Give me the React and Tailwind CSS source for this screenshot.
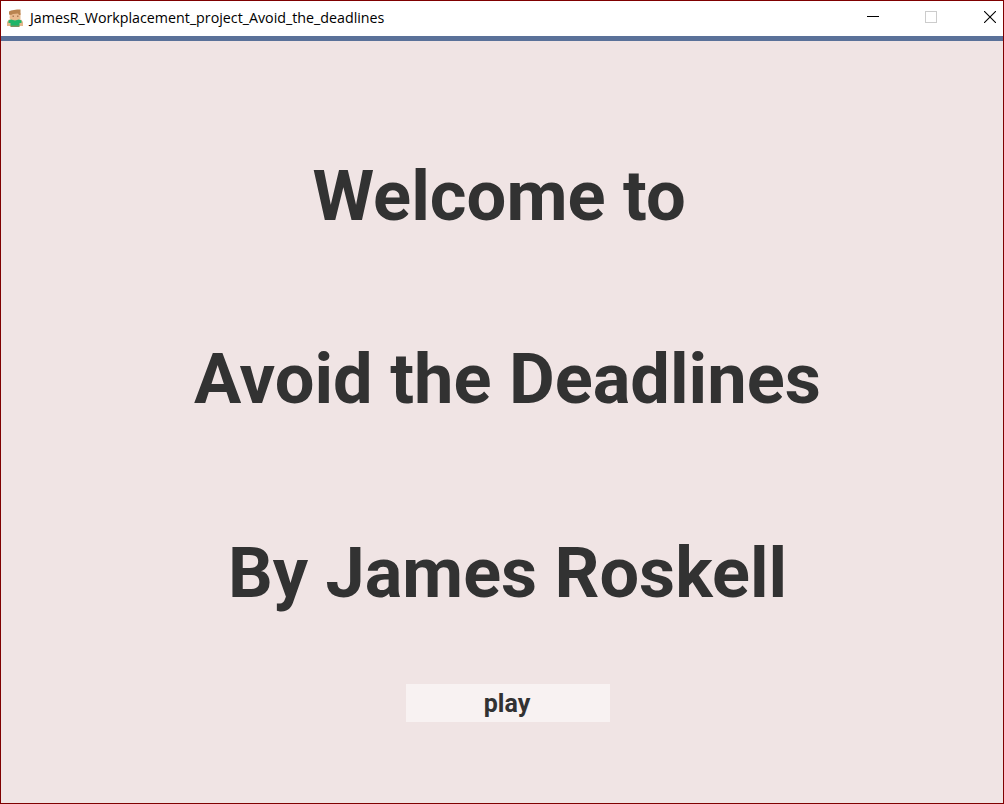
function CharacterIcon() {
  return (
    <svg className="mb-px h-[18px] w-4 shrink-0" viewBox="0 0 16 18">
      <path d="M3 4h10.500v5.500L12 11H4L2.500 9z" fill="#e9bb8f" />
      <path d="M2 5.500V2.500L4 1.500l6-1h3.500V6h-1.500L11 4.500 6 5 4 6z" fill="#b98450" />
      <path d="M5.500 6.500h1.500V8H5.500zM10 6.500h1.500V8H10z" fill="#b07c57" />
      <path d="M2 10.500h12L16 13v4h-3v1H3v-1H0v-4z" fill="#e3b78c" />
      <path d="M1.500 11.500L4 10.500l4 1 4-1 2.500 1v2.500h-2V17h-9v-3h-2z" fill="#1fb568" />
      <path d="M4 16.500h8V18H4z" fill="#7c9260" />
    </svg>
  );
}

function TitleBar() {
  return (
    <header className="flex h-[35px] shrink-0 items-center bg-white pl-[6px] text-black">
      <CharacterIcon />
      <h1 className="mb-[2px] ml-[7px] font-['Open_Sans',sans-serif] text-[14.25px] whitespace-nowrap">
        JamesR_Workplacement_project_Avoid_the_deadlines
      </h1>
      <div className="mb-[3px] ml-auto flex items-center gap-[46px] pr-[7px]">
        <svg width="12" height="12" shapeRendering="crispEdges"><path d="M0 5.500h12" stroke="#000" /></svg>
        <svg className="mr-px" width="12" height="12" shapeRendering="crispEdges"><path d="M.5.5h11v11H.5z" fill="none" stroke="#ccc" /></svg>
        <svg width="12" height="12"><path d="M0 0l12 12M12 0L0 12" stroke="#000" strokeWidth="1.100" /></svg>
      </div>
    </header>
  );
}

export default function App() {
  return (
    <div className="flex h-[804px] w-[1004px] flex-col overflow-hidden border border-[#7f0000] bg-[#f0e4e4]">
      <TitleBar />
      <div className="h-[5px] shrink-0 bg-[#5a7199]" />
      <main className="flex flex-col font-[Roboto,sans-serif] font-bold text-[#323232]">
        <p className="mt-[113px] ml-[311.500px] h-[84px] text-[70.5px] leading-[84px] whitespace-nowrap">Welcome to</p>
        <p className="mt-[99px] ml-[193px] h-[84px] text-[70.4px] leading-[84px] whitespace-nowrap">Avoid the Deadlines</p>
        <p className="mt-[110px] ml-[227px] h-[84px] text-[70.2px] leading-[84px] whitespace-nowrap">By James Roskell</p>
        <button className="mt-[69px] ml-[405px] h-[38px] w-[204px] bg-[#f8f2f2] pt-px pr-[2px] text-[25px]">play</button>
      </main>
    </div>
  );
}
